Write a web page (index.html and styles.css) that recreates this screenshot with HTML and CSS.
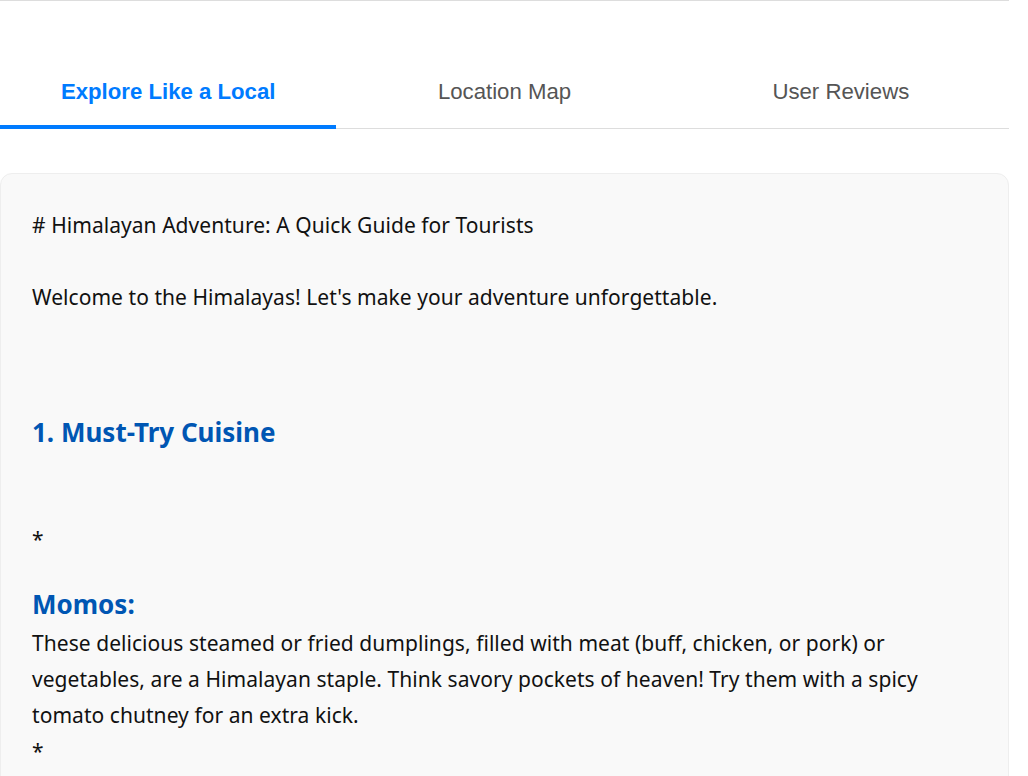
FILE: index.html
```html
<!DOCTYPE html>
<html lang="en">
<head>
<meta charset="utf-8">
<title>Himalayan Adventure</title>
<link rel="stylesheet" href="styles.css">
</head>
<body>
<div class="page">
  <nav class="tabs">
    <div class="tab active">Explore Like a Local</div>
    <div class="tab">Location Map</div>
    <div class="tab">User Reviews</div>
  </nav>
  <section class="card">
    <p class="md-line title-line"># Himalayan Adventure: A Quick Guide for Tourists</p>
    <p class="md-line">Welcome to the Himalayas! Let's make your adventure unforgettable.</p>
    <h2 class="md-h2">1. Must-Try Cuisine</h2>
    <p class="md-line star-1">*</p>
    <h3 class="md-h3">Momos:</h3>
    <p class="md-line body-para">These delicious steamed or fried dumplings, filled with meat (buff, chicken, or pork) or vegetables, are a Himalayan staple. Think savory pockets of heaven! Try them with a spicy tomato chutney for an extra kick.</p>
    <p class="md-line">*</p>
  </section>
</div>
</body>
</html>
```

FILE: styles.css
```css
html, body {
  margin: 0;
  padding: 0;
  background: #ffffff;
}

.page {
  width: 1009px;
}

.tabs {
  display: flex;
  border-top: 1px solid #dddddd;
  border-bottom: 1px solid #dddddd;
  padding-top: 58px;
}

.tab {
  flex: 1 1 0;
  text-align: center;
  font-family: "Liberation Sans", Arial, sans-serif;
  font-size: 22.2px;
  line-height: 25px;
  color: #555555;
  padding: 20px 0 21px;
  border-bottom: 4px solid transparent;
  margin-bottom: -1px;
}

.tab.active {
  color: #007bff;
  font-weight: bold;
  border-bottom-color: #007bff;
}

.card {
  margin-top: 44px;
  background: #f9f9f9;
  border: 1px solid #eeeeee;
  border-radius: 12px;
  padding: 33px 30px 30px 31px;
  font-family: "Noto Sans", "Open Sans", sans-serif;
  color: #111111;
}

.md-line {
  margin: 0;
  font-size: 21px;
  line-height: 36px;
  letter-spacing: 0.05px;
}

.title-line {
  margin-bottom: 36px;
}

.md-h2 {
  margin: 101px 0 0;
  font-size: 26px;
  line-height: 32px;
  font-weight: bold;
  color: #0056b3;
}

.star-1 {
  margin-top: 73px;
}

.md-h3 {
  margin: 32px 0 0;
  font-size: 26px;
  line-height: 30px;
  font-weight: bold;
  color: #0056b3;
}

.body-para {
  margin-top: 6px;
}
```
